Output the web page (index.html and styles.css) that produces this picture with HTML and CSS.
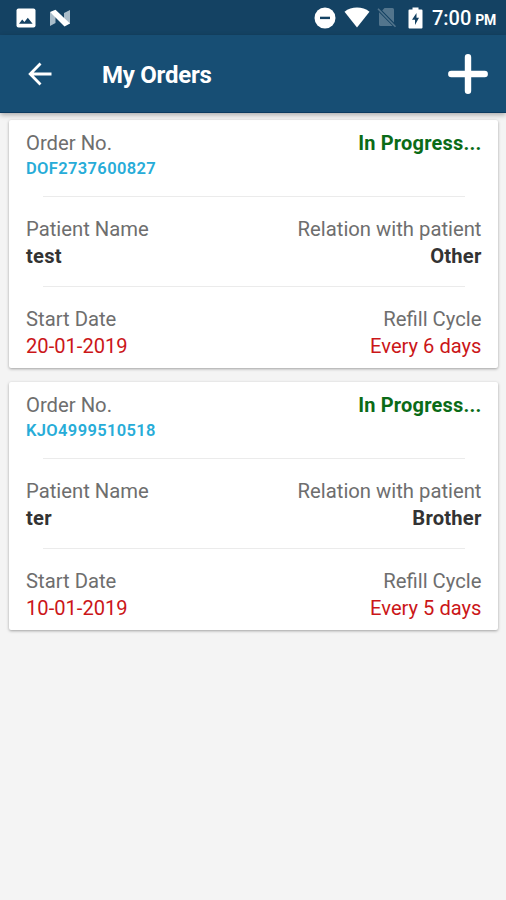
FILE: index.html
```
<!DOCTYPE html>
<html lang="en">
<head>
    <meta charset="UTF-8">
    <meta name="viewport" content="width=device-width, initial-scale=1.0">
    <link rel="stylesheet" href="styles.css">
    <title>My Orders</title>
</head>
<body>
    <div class="status-bar">
        <div class="status-left">
            <svg class="icon-picture" width="20" height="20" viewBox="0 0 20 20">
                <rect x="0.5" y="0.5" width="19" height="19" rx="2" fill="#fff"/>
                <path d="M3 15.8L6.2 11.5L8.4 14L11.8 9.8L16.6 15.8Z" fill="#144263"/>
            </svg>
            <svg class="icon-n" width="22" height="18" viewBox="0 0 22 18">
                <path d="M1 3L6.5 7V14L1 17ZM15 4L21 1V15L15 11Z" fill="#a9bcc9"/>
                <path d="M1 3L6.5 0.8L21 14.5L15.5 17.4Z" fill="#fff"/>
            </svg>
        </div>
        <div class="status-right">
            <svg class="icon-dnd" width="22" height="22" viewBox="0 0 22 22">
                <circle cx="11" cy="11" r="10.5" fill="#fff"/>
                <rect x="6" y="9.7" width="10" height="2.4" fill="#144263"/>
            </svg>
            <svg class="icon-wifi" width="26" height="21" viewBox="0 0 26 21">
                <path d="M0.5 4.8C7.5 -0.8 18.5 -0.8 25.5 4.8L13 20.5Z" fill="#fff"/>
            </svg>
            <svg class="icon-sim" width="20" height="21" viewBox="0 0 20 21">
                <path d="M7.5 1H15.5Q17 1 17 2.5V15.4L5.2 3.4ZM2 5.2L15.7 19H3.5Q2 19 2 17.5Z" fill="#53758d"/>
                <path d="M1 1.8L18.5 19.7" stroke="#53758d" stroke-width="1.6"/>
            </svg>
            <svg class="icon-battery" width="15" height="22" viewBox="0 0 15 22">
                <path d="M4.5 0.5H10.5V2.5H13.5Q14.5 2.5 14.5 3.5V20.5Q14.5 21.5 13.5 21.5H1.5Q0.5 21.5 0.5 20.5V3.5Q0.5 2.5 1.5 2.5H4.5Z" fill="#fff"/>
                <path d="M8.5 6L4 12.8H7V18L11 10.7H8.5Z" fill="#144263"/>
            </svg>
            <span class="clock">7:00</span>
            <span class="meridiem">PM</span>
        </div>
    </div>

    <header class="toolbar">
        <svg class="icon-back" width="24" height="24" viewBox="0 0 24 24">
            <path d="M23.5 12H2.5M12.5 1.6L2.2 12L12.5 22.4" fill="none" stroke="#fff" stroke-width="2.8"/>
        </svg>
        <h1>My Orders</h1>
        <svg class="icon-add" width="40" height="40" viewBox="0 0 40 40">
            <path d="M20 3.3V36.7M3.3 20H36.7" stroke="#fff" stroke-width="6.4" stroke-linecap="round"/>
        </svg>
    </header>

    <main class="orders">
        <div class="card">
            <div class="row">
                <div class="col">
                    <span class="label">Order No.</span>
                    <span class="order-no">DOF2737600827</span>
                </div>
                <div class="col right">
                    <span class="progress">In Progress...</span>
                </div>
            </div>
            <hr>
            <div class="row">
                <div class="col">
                    <span class="label">Patient Name</span>
                    <span class="name">test</span>
                </div>
                <div class="col right">
                    <span class="label">Relation with patient</span>
                    <span class="name">Other</span>
                </div>
            </div>
            <hr>
            <div class="row">
                <div class="col">
                    <span class="label">Start Date</span>
                    <span class="date">20-01-2019</span>
                </div>
                <div class="col right">
                    <span class="label">Refill Cycle</span>
                    <span class="date">Every 6 days</span>
                </div>
            </div>
        </div>

        <div class="card">
            <div class="row">
                <div class="col">
                    <span class="label">Order No.</span>
                    <span class="order-no">KJO4999510518</span>
                </div>
                <div class="col right">
                    <span class="progress">In Progress...</span>
                </div>
            </div>
            <hr>
            <div class="row">
                <div class="col">
                    <span class="label">Patient Name</span>
                    <span class="name">ter</span>
                </div>
                <div class="col right">
                    <span class="label">Relation with patient</span>
                    <span class="name">Brother</span>
                </div>
            </div>
            <hr>
            <div class="row">
                <div class="col">
                    <span class="label">Start Date</span>
                    <span class="date">10-01-2019</span>
                </div>
                <div class="col right">
                    <span class="label">Refill Cycle</span>
                    <span class="date">Every 5 days</span>
                </div>
            </div>
        </div>
    </main>
</body>
</html>
```
FILE: styles.css
```
* {
    box-sizing: border-box;
}

body {
    margin: 0;
    min-height: 100vh;
    background-color: #f4f4f4;
    font-family: Roboto, "Liberation Sans", sans-serif;
}

svg {
    display: block;
    flex: none;
}

.status-bar {
    display: flex;
    justify-content: space-between;
    height: 35px;
    padding: 0 10px 0 16px;
    background-color: #144263;
    color: white;
}

.status-left, .status-right {
    display: flex;
    align-items: center;
}

.icon-n {
    margin-left: 13px;
}

.icon-wifi {
    margin-left: 7.5px;
}

.icon-sim {
    margin-left: 7.5px;
}

.icon-battery {
    margin-left: 11px;
}

.clock {
    margin-left: 8.5px;
    font-size: 20px;
    font-weight: 500;
    line-height: 38px;
}

.meridiem {
    margin: 4px 0 0 4px;
    font-size: 14px;
    font-weight: 700;
    letter-spacing: -0.3px;
}

.toolbar {
    position: relative;
    display: flex;
    align-items: center;
    height: 78px;
    padding: 0 18.5px 0 28px;
    background-color: #174e74;
    border-bottom: 1px solid #0b3a60;
    color: white;
    box-shadow: 0 2px 5px rgba(0, 0, 0, 0.3);
}

.toolbar h1 {
    margin: 2px 0 0 50px;
    font-size: 24px;
    font-weight: 700;
    line-height: 28px;
    letter-spacing: -0.25px;
}

.icon-add {
    margin-left: auto;
}

.orders {
    display: flex;
    flex-direction: column;
    gap: 13.5px;
    padding: 7px 8px 0 9px;
}

.card {
    height: 248px;
    padding: 10px 16.5px 0 17px;
    background-color: white;
    border-radius: 2px;
    box-shadow: 0 1px 3px rgba(0, 0, 0, 0.35);
}

.row {
    display: flex;
    justify-content: space-between;
    height: 54px;
}

.col {
    display: flex;
    flex-direction: column;
    line-height: 27px;
}

.right {
    text-align: right;
}

hr {
    height: 1px;
    margin: 12px 17px 19px;
    border: none;
    background-color: #ebebeb;
}

.row + hr ~ hr {
    margin-top: 16px;
}

.label {
    color: #6e6e6e;
    font-size: 20.25px;
}

.order-no {
    color: #27acd8;
    font-size: 16.5px;
    font-weight: 600;
    line-height: 23px;
    letter-spacing: 0.35px;
}

.progress {
    color: #0b6b17;
    font-size: 20px;
    font-weight: 700;
    letter-spacing: 0.2px;
}

.name {
    color: #333;
    font-size: 20.2px;
    font-weight: 700;
    letter-spacing: 0.2px;
}

.date {
    color: #cb1618;
    font-size: 20.15px;
}
```
